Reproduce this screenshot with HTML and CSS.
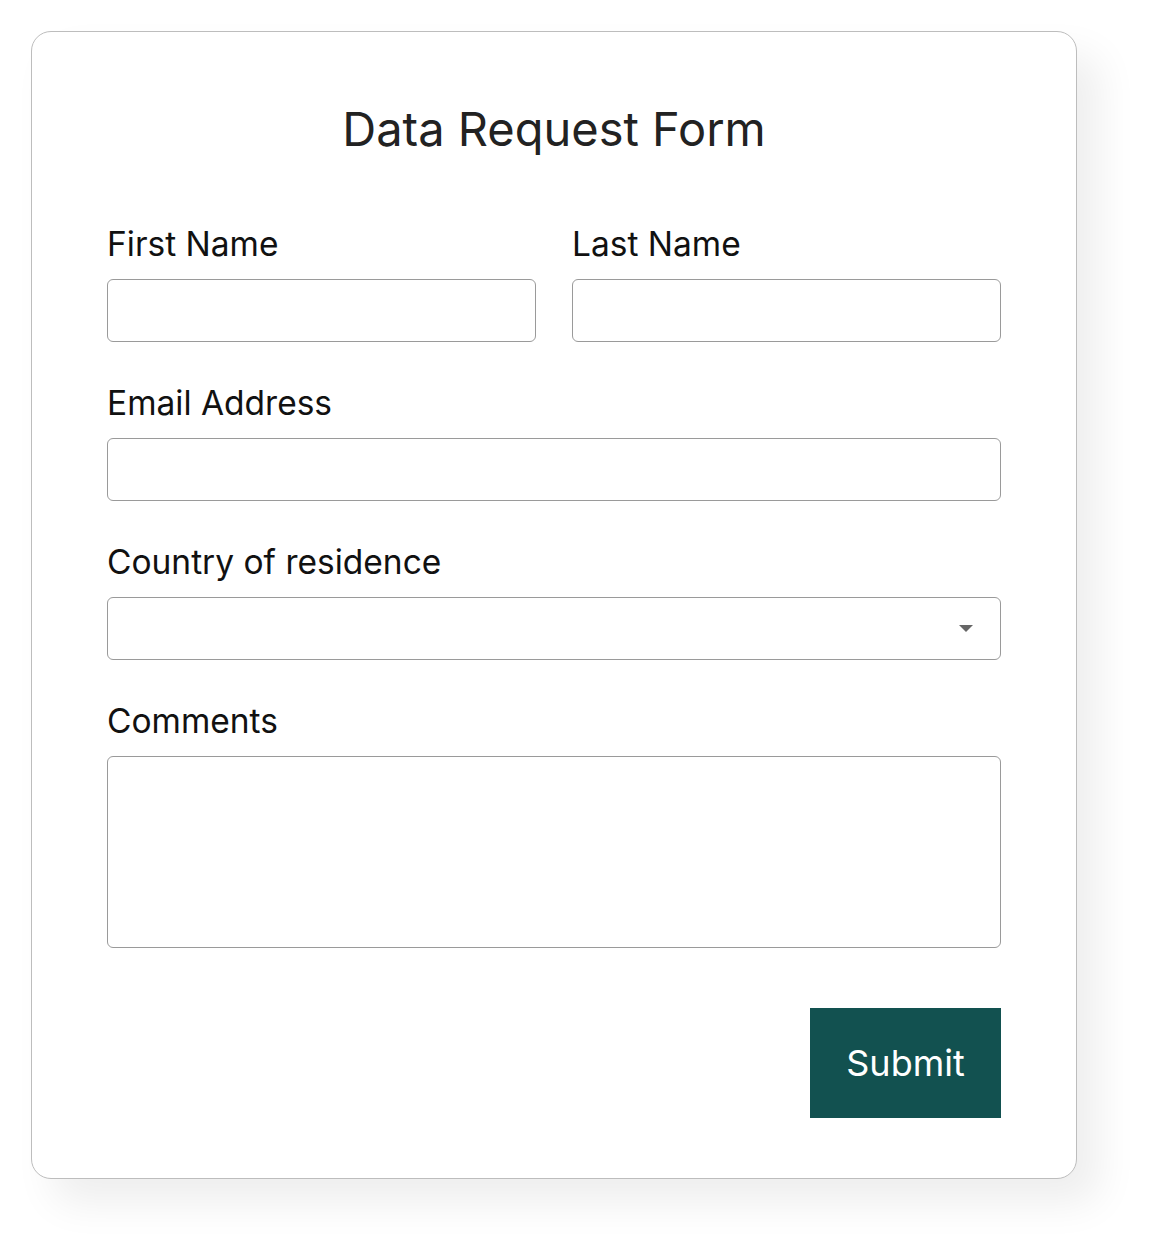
FILE: index.html
```html
<!DOCTYPE html>
<html>
<head>
<meta charset="utf-8">
<link rel="stylesheet" href="styles.css">
</head>
<body>
<form class="card">
  <h1 class="title">Data Request Form</h1>
  <div class="row">
    <div class="field">
      <label class="label">First Name</label>
      <div class="input"></div>
    </div>
    <div class="field">
      <label class="label">Last Name</label>
      <div class="input"></div>
    </div>
  </div>
  <div class="field">
    <label class="label">Email Address</label>
    <div class="input"></div>
  </div>
  <div class="field">
    <label class="label">Country of residence</label>
    <div class="input select"><span class="caret"></span></div>
  </div>
  <div class="field">
    <label class="label">Comments</label>
    <div class="input textarea"></div>
  </div>
  <div class="actions">
    <button type="button" class="submit">Submit</button>
  </div>
</form>
</body>
</html>
```
FILE: styles.css
```css
html, body {
  margin: 0;
  background: #fff;
}
body {
  padding: 31px 0 76px 31px;
  font-family: "Inter", "Noto Sans", sans-serif;
  color: #111;
}
.card {
  box-sizing: border-box;
  width: 1046px;
  height: 1148px;
  border: 1px solid #bdbdbd;
  border-radius: 20px;
  background: #fff;
  box-shadow: 22px 24px 40px rgba(0, 0, 0, 0.07);
  padding: 68px 75px 0 75px;
  display: flex;
  flex-direction: column;
  gap: 42px;
}
.title {
  margin: 0 0 25px 0;
  font-weight: 400;
  font-size: 47px;
  line-height: 58px;
  text-align: center;
  color: #222;
}
.row {
  display: grid;
  grid-template-columns: 1fr 1fr;
  gap: 36px;
}
.field {
  display: flex;
  flex-direction: column;
  gap: 16px;
}
.label {
  font-size: 33.5px;
  line-height: 38px;
  color: #111;
}
.input {
  box-sizing: border-box;
  height: 63px;
  border: 1px solid #9a9a9a;
  border-radius: 6px;
  background: #fff;
  position: relative;
}
.caret {
  position: absolute;
  right: 27px;
  top: 27px;
  width: 0;
  height: 0;
  border-left: 7px solid transparent;
  border-right: 7px solid transparent;
  border-top: 7px solid #666;
}
.textarea {
  height: 192px;
}
.actions {
  display: flex;
  justify-content: flex-end;
  margin-top: 18px;
}
.submit {
  width: 191px;
  height: 110px;
  border: none;
  background: #125150;
  color: #fff;
  font-family: inherit;
  font-size: 36px;
  padding: 0;
  cursor: pointer;
}
```
